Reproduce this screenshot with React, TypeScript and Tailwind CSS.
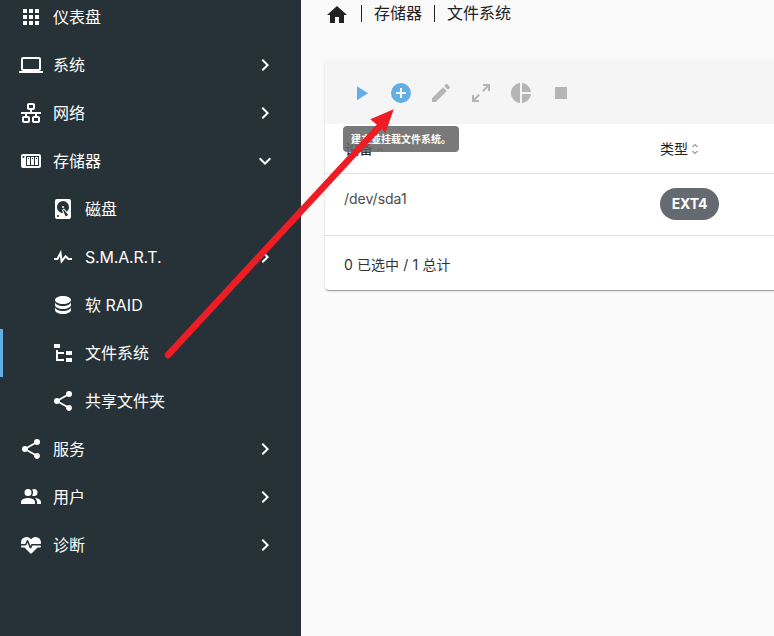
import React from "react";

const icons = {
  apps: "M16,20H20V16H16M16,14H20V10H16M10,8H14V4H10M16,8H20V4H16M10,14H14V10H10M4,14H8V10H4M4,20H8V16H4M10,20H14V16H10M4,8H8V4H4V8Z",
  laptop: "M4,6H20V16H4M20,18A2,2 0 0,0 22,16V6C22,4.89 21.1,4 20,4H4C2.89,4 2,4.89 2,6V16A2,2 0 0,0 4,18H0V20H24V18H20Z",
  lan: "M10,2C8.89,2 8,2.89 8,4V7C8,8.11 8.89,9 10,9H11V11H2V13H6V15H5C3.89,15 3,15.89 3,17V20C3,21.11 3.89,22 5,22H9C10.11,22 11,21.11 11,20V17C11,15.89 10.11,15 9,15H8V13H16V15H15C13.89,15 13,15.89 13,17V20C13,21.11 13.89,22 15,22H19C20.11,22 21,21.11 21,20V17C21,15.89 20.11,15 19,15H18V13H22V11H13V9H14C15.11,9 16,8.11 16,7V4C16,2.89 15.11,2 14,2H10M10,4H14V7H10V4M5,17H9V20H5V17M15,17H19V20H15V17Z",
  nas: "M4,5C2.89,5 2,5.89 2,7V17C2,18.11 2.89,19 4,19H20C21.11,19 22,18.11 22,17V7C22,5.89 21.11,5 20,5H4M4.5,7A1,1 0 0,1 5.5,8A1,1 0 0,1 4.5,9A1,1 0 0,1 3.5,8A1,1 0 0,1 4.5,7M7,7H20V17H7V7M8,8V16H11V8H8M12,8V16H15V8H12M16,8V16H19V8H16M9,9H10V10H9V9M13,9H14V10H13V9M17,9H18V10H17V9Z",
  disk: "M6,2H18A2,2 0 0,1 20,4V20A2,2 0 0,1 18,22H6A2,2 0 0,1 4,20V4A2,2 0 0,1 6,2M12,4A6,6 0 0,0 6,10C6,13.31 8.69,16 12.1,16L11.22,13.77C10.95,13.29 11.11,12.68 11.59,12.4L12.45,11.9C12.93,11.63 13.54,11.79 13.82,12.27L15.74,14.69C17.12,13.59 18,11.9 18,10A6,6 0 0,0 12,4M12,9A1,1 0 0,1 13,10A1,1 0 0,1 12,11A1,1 0 0,1 11,10A1,1 0 0,1 12,9M7,18A1,1 0 0,0 6,19A1,1 0 0,0 7,20A1,1 0 0,0 8,19A1,1 0 0,0 7,18M12.09,13.27L14.58,19.58L17.17,18.08L12.95,12.77L12.09,13.27Z",
  pulse: "M3,13H5.79L10.1,4.79L11.28,13.75L14.5,9.66L17.83,13H21V15H17L14.67,12.67L9.92,18.73L8.94,11.31L7,15H3V13Z",
  database: "M12,3C7.58,3 4,4.79 4,7C4,9.21 7.58,11 12,11C16.42,11 20,9.21 20,7C20,4.79 16.42,3 12,3M4,9V12C4,14.21 7.58,16 12,16C16.42,16 20,14.21 20,12V9C20,11.21 16.42,13 12,13C7.58,13 4,11.21 4,9M4,14V17C4,19.21 7.58,21 12,21C16.42,21 20,19.21 20,17V14C20,16.21 16.42,18 12,18C7.58,18 4,16.21 4,14Z",
  tree: "M3,3H9V7H3V3M15,10H21V14H15V10M15,17H21V21H15V17M13,13H7V18H13V20H7L5,20V9H7V11H13V13Z",
  share: "M18,16.08C17.24,16.08 16.56,16.38 16.04,16.85L8.91,12.7C8.96,12.47 9,12.24 9,12C9,11.76 8.96,11.53 8.91,11.3L15.96,7.19C16.5,7.69 17.21,8 18,8A3,3 0 0,0 21,5A3,3 0 0,0 18,2A3,3 0 0,0 15,5C15,5.24 15.04,5.47 15.09,5.7L8.04,9.81C7.5,9.31 6.79,9 6,9A3,3 0 0,0 3,12A3,3 0 0,0 6,15C6.79,15 7.5,14.69 8.04,14.19L15.16,18.34C15.11,18.55 15.08,18.77 15.08,19C15.08,20.61 16.39,21.91 18,21.91C19.61,21.91 20.92,20.61 20.92,19A2.92,2.92 0 0,0 18,16.08Z",
  users: "M16 17V19H2V17S2 13 9 13 16 17 16 17M12.5 7.5A3.5 3.5 0 1 0 9 11A3.5 3.5 0 0 0 12.5 7.5M15.94 13A5.32 5.32 0 0 1 18 17V19H22V17S22 13.37 15.94 13M15 4A3.39 3.39 0 0 0 13.07 4.59A5 5 0 0 1 13.07 10.41A3.39 3.39 0 0 0 15 11A3.5 3.5 0 0 0 15 4Z",
  heart: "M7.5,4A5.5,5.5 0 0,0 2,9.5C2,10 2.09,10.5 2.22,11H6.3L7.57,7.63C7.87,6.83 9.05,6.75 9.43,7.63L11.5,13L12.09,11.58C12.22,11.25 12.57,11 13,11H21.78C21.91,10.5 22,10 22,9.5A5.5,5.5 0 0,0 16.5,4C14.64,4 13,4.93 12,6.34C11,4.93 9.36,4 7.5,4V4M3,12.5A1,1 0 0,0 2,13.5A1,1 0 0,0 3,14.5H5.44L11,20C12,20.9 12,20.9 13,20L18.56,14.5H21A1,1 0 0,0 22,13.5A1,1 0 0,0 21,12.5H13.4L12.47,14.8C12.07,15.81 10.92,15.67 10.55,14.83L8.5,9.5L7.54,11.83C7.39,12.21 7.05,12.5 6.6,12.5H3Z",
  right: "M8.59,16.58L13.17,12L8.59,7.41L10,6L16,12L10,18L8.59,16.58Z",
  down: "M7.41,8.58L12,13.17L16.59,8.58L18,10L12,16L6,10L7.41,8.58Z",
  home: "M10,20V14H14V20H19V12H22L12,3L2,12H5V20H10Z",
  play: "M8,5.14V19.14L19,12.14L8,5.14Z",
  plus: "M17,13H13V17H11V13H7V11H11V7H13V11H17M12,2A10,10 0 0,0 2,12A10,10 0 0,0 12,22A10,10 0 0,0 22,12A10,10 0 0,0 12,2Z",
  pencil: "M20.71,7.04C21.1,6.65 21.1,6 20.71,5.63L18.37,3.29C18,2.9 17.35,2.9 16.96,3.29L15.12,5.12L18.87,8.87M3,17.25V21H6.75L17.81,9.93L14.06,6.18L3,17.25Z",
  expand: "M10,21V19H6.41L10.91,14.5L9.5,13.09L5,17.59V14H3V21H10M14.5,10.91L19,6.41V10H21V3H14V5H17.59L13.09,9.5L14.5,10.91Z",
  pie: "M11,2V22C5.9,21.5 2,17.2 2,12C2,6.8 5.9,2.5 11,2M13,2V11H22C21.5,6.2 17.8,2.5 13,2M13,13V22C17.7,21.5 21.5,17.8 22,13H13Z",
  stop: "M18,18H6V6H18V18Z",
};

type IconName = keyof typeof icons;

function Icon({ name, className = "" }: { name: IconName; className?: string }) {
  return (
    <svg viewBox="0 0 24 24" className={`size-6 shrink-0 fill-current ${className}`}>
      <path d={icons[name]} />
    </svg>
  );
}

type Item = { icon: IconName; label: string; arrow?: "right" | "down"; nested?: boolean; active?: boolean };

const items: Item[] = [
  { icon: "apps", label: "仪表盘" },
  { icon: "laptop", label: "系统", arrow: "right" },
  { icon: "lan", label: "网络", arrow: "right" },
  { icon: "nas", label: "存储器", arrow: "down" },
  { icon: "disk", label: "磁盘", nested: true },
  { icon: "pulse", label: "S.M.A.R.T.", arrow: "right", nested: true },
  { icon: "database", label: "软 RAID", nested: true },
  { icon: "tree", label: "文件系统", nested: true, active: true },
  { icon: "share", label: "共享文件夹", nested: true },
  { icon: "share", label: "服务", arrow: "right" },
  { icon: "users", label: "用户", arrow: "right" },
  { icon: "heart", label: "诊断", arrow: "right" },
];

function NavRow({ item }: { item: Item }) {
  return (
    <li
      className={`flex h-12 items-center gap-2.5 border-l-[3px] pr-6 ${item.nested ? "pl-12" : "pl-4"} ${
        item.active ? "border-[#64aee6]" : "border-transparent"
      }`}
    >
      <Icon name={item.icon} />
      <span className={`flex-1 text-base leading-6 ${item.icon === "pulse" ? "tracking-[-0.2px]" : ""}`}>
        {item.label}
      </span>
      {item.arrow && <Icon name={item.arrow} />}
    </li>
  );
}

function SortMark({ ascending = false }: { ascending?: boolean }) {
  return (
    <svg viewBox="0 0 8 12" className="ml-[3px] h-3 w-2 fill-none stroke-[#9a9a9a] stroke-[1.2]">
      <path d={ascending ? "M1 8 4 5 7 8" : "M1.5 4 4 1.5 6.5 4M1.5 8 4 10.5 6.5 8"} />
    </svg>
  );
}

const tools: { name: IconName; on?: boolean }[] = [
  { name: "play", on: true },
  { name: "plus", on: true },
  { name: "pencil" },
  { name: "expand" },
  { name: "pie" },
  { name: "stop" },
];

export default function App() {
  return (
    <div className="relative flex h-[636px] w-[774px] overflow-hidden bg-[#fafafa] font-[Inter,'Noto_Sans_CJK_SC',sans-serif] text-[#212121]">
      <nav className="w-[301px] shrink-0 overflow-hidden bg-[#273238] text-white">
        <ul className="-mt-[7px]">
          {items.map((item) => (
            <NavRow key={item.label} item={item} />
          ))}
        </ul>
      </nav>

      <main className="min-w-0 flex-1 overflow-hidden pl-6">
        <header className="flex h-[28px] items-center text-base leading-6">
          <Icon name="home" className="mt-0.5" />
          <span className="ml-3 mb-px h-[17px] w-px bg-[#212121]" />
          <span className="ml-3 mb-0.5">存储器</span>
          <span className="ml-3 mb-px h-[17px] w-px bg-[#212121]" />
          <span className="ml-3 mb-0.5">文件系统</span>
        </header>

        <section className="mt-8 w-[500px] overflow-hidden rounded bg-white text-sm shadow-[0_2px_1px_-1px_rgba(0,0,0,0.2),0_1px_1px_0_rgba(0,0,0,0.14),0_1px_3px_0_rgba(0,0,0,0.12)]">
          <div className="flex h-16 items-center gap-4 bg-[#f5f5f5] pl-6 pt-0.5">
            {tools.map((t) => (
              <Icon key={t.name} name={t.name} className={t.on ? "text-[#64aee6]" : "text-[#b5b5b5]"} />
            ))}
          </div>
          <div className="flex h-[50px] items-center border-b border-[#e0e0e0] pl-5">
            <div className="flex w-[315px] items-center">设备<SortMark ascending /></div>
            <div className="flex items-center">类型<SortMark /></div>
          </div>
          <div className="flex h-[62px] border-b border-[#e0e0e0] pl-[19px] pt-[14px]">
            <div className="w-[316px] pt-px text-[#4a4a4a]">/dev/sda1</div>
            <div className="flex h-8 w-[59px] items-center justify-center rounded-full bg-[#656a70] font-bold tracking-[-0.1px] text-white">EXT4</div>
          </div>
          <div className="flex h-[54px] items-center pl-[19px] pt-1 text-[#333333] [word-spacing:0.3px]">0 已选中 / 1 总计</div>
        </section>
      </main>

      <div className="absolute left-[343px] top-[126px] flex h-[26px] w-[116px] items-center rounded bg-[#616161]/85 pl-2 text-[10px] font-bold text-white">
        建立並挂载文件系统。
      </div>

      <svg className="pointer-events-none absolute inset-0 size-full" viewBox="0 0 774 636">
        <path d="M168 355 379 127" stroke="#ee1c25" strokeWidth="6.6" strokeLinecap="round" />
        <path d="M393.700 109.200 370.300 119.300 375.500 123.500 383 130 385.500 133Z" fill="#ee1c25" />
      </svg>
    </div>
  );
}
